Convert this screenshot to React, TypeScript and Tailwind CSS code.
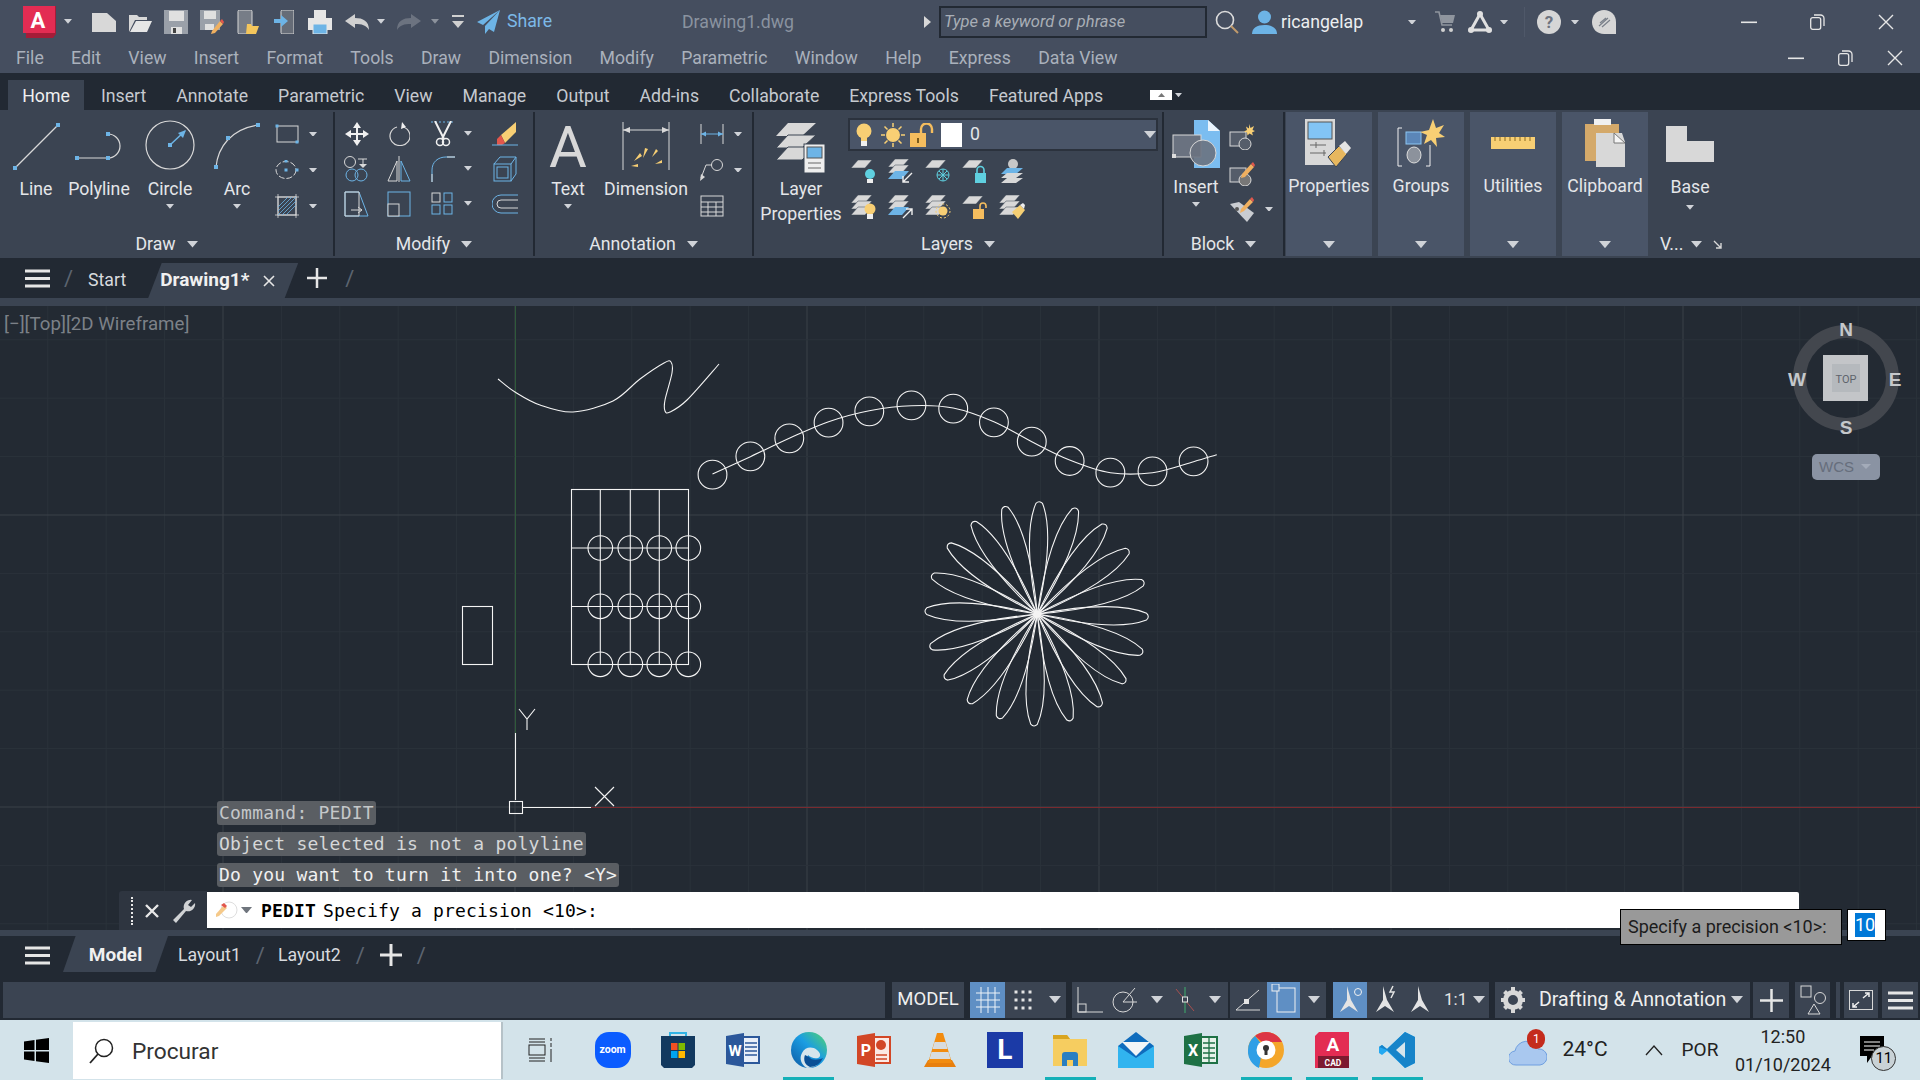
import type { ReactNode } from "react";

const ROW_TITLE = "bg-[#454e5f]";
const DARK = "bg-[#222933]";
const RIBBON = "bg-[#3b4452]";

const LINE = "#d8d8d8";
const BLUE = "#6db4e6";
const YELLOW = "#f8cf74";

function Ic({ w, h = w, children }: { w: number; h?: number; children: ReactNode }) {
  return (
    <svg width={w} height={h} viewBox={`0 0 ${w} ${h}`} fill="none" className="shrink-0">
      {children}
    </svg>
  );
}

function Caret({ w = 10, color = "#d0d3d8" }: { w?: number; color?: string }) {
  return (
    <svg width={w} height={w * 0.6} viewBox="0 0 10 6" className="shrink-0">
      <path d="M0 0h10L5 6z" fill={color} />
    </svg>
  );
}

function Node({ x, y, s = 4 }: { x: number; y: number; s?: number }) {
  return <rect x={x - s / 2} y={y - s / 2} width={s} height={s} fill={BLUE} />;
}

/* ---------- title bar icons ---------- */
const icons = {
  logo: (
    <Ic w={36} h={32}>
      <path d="M3 0h30v28l-3 4H3z" fill="#a51c38" />
      <rect x="0" width="32" height="27" fill="#e32c53" />
      <text x="15" y="22" textAnchor="middle" fontSize="22" fontWeight="700" fill="#fff" fontFamily="Roboto">A</text>
    </Ic>
  ),
  newDoc: <Ic w={24} h={20}><path d="M0 1h15l9 8v11H0z" fill={LINE} /></Ic>,
  open: <Ic w={24} h={20}><path d="M1 3h8l2 2h8v3H7L1 20z" fill={LINE} /><path d="M8 9h16l-5 11H2z" fill="#e6e6e6" /></Ic>,
  save: (
    <Ic w={24} h={24}>
      <rect width="24" height="24" fill="#9aa0a9" />
      <rect x="5" y="1" width="15" height="10" fill="#e0e0e0" />
      <rect x="7" y="17" width="11" height="7" fill="#e0e0e0" />
      <rect x="9" y="18" width="3" height="5" fill="#444" />
    </Ic>
  ),
  saveAs: (
    <Ic w={24} h={24}>
      <rect width="20" height="20" fill="#9aa0a9" />
      <rect x="4" y="1" width="12" height="8" fill="#e0e0e0" />
      <rect x="5" y="14" width="9" height="6" fill="#e0e0e0" />
      <path d="M12 21l8-10 3 3-8 9-4 1z" fill="#f0b060" />
      <path d="M20 11l2-2 2 3-1 2z" fill="#e2574c" />
    </Ic>
  ),
  phone: (
    <Ic w={22} h={24}>
      <rect x="1" y="0" width="14" height="24" rx="1.5" fill="#777d87" stroke="#d8d8d8" />
      <path d="M10 14h4l1 2h7l-3 8H9z" fill="#f4c65c" />
    </Ic>
  ),
  phoneUp: (
    <Ic w={20} h={24}>
      <rect x="7" y="0" width="13" height="24" rx="1.5" fill="#666c77" stroke="#d8d8d8" />
      <path d="M0 9h7V5l7 6-7 6v-4H0z" fill={BLUE} />
    </Ic>
  ),
  print: (
    <Ic w={24} h={24}>
      <rect x="6" y="0" width="12" height="8" fill="#e6e6e6" />
      <rect x="0" y="8" width="24" height="12" fill="#e6e6e6" />
      <rect x="5" y="14" width="14" height="10" fill={BLUE} stroke="#e6e6e6" />
    </Ic>
  ),
  undo: <Ic w={24} h={16}><path d="M0 7l10-7v4c8 0 14 3 14 12-3-5-7-6-14-6v4z" fill="#d0d0d0" /></Ic>,
  redo: <Ic w={24} h={16}><path d="M24 7L14 0v4C6 4 0 7 0 16c3-5 7-6 14-6v4z" fill="#6c7380" /></Ic>,
  custom: <Ic w={12} h={14}><path d="M0 1h12" stroke="#d0d0d0" strokeWidth="2" /><path d="M0 6h12L6 13z" fill="#d0d0d0" /></Ic>,
  share: <Ic w={23} h={24}><path d="M23 0L0 12l6 3zM23 0L8 16v8l4-5 5 3z" fill="#6db4e6" /></Ic>,
  search: (
    <Ic w={25} h={24}>
      <circle cx="10" cy="10" r="8.5" stroke="#dcdcdc" strokeWidth="1.6" />
      <path d="M16 16l7 7" stroke="#c19a6b" strokeWidth="2" />
    </Ic>
  ),
  user: (
    <Ic w={25} h={24}>
      <circle cx="12.5" cy="7" r="6.5" fill={BLUE} />
      <path d="M0 24c0-6 5-9 12.5-9S25 18 25 24z" fill={BLUE} />
    </Ic>
  ),
  cart: (
    <Ic w={20} h={22}>
      <path d="M0 1h4l3 13h10" stroke="#8f959e" strokeWidth="1.6" />
      <path d="M5 4h15l-2 8H7z" fill="#8f959e" />
      <circle cx="8" cy="19" r="2" fill="#d0d0d0" />
      <circle cx="16" cy="19" r="2" fill="#d0d0d0" />
    </Ic>
  ),
  tri: (
    <Ic w={24} h={22}>
      <path d="M12 3L3 19h18z" stroke="#e0e0e0" strokeWidth="3" />
      <circle cx="12" cy="3" r="3" fill="#e0e0e0" />
      <circle cx="3" cy="19" r="3" fill="#e0e0e0" />
      <circle cx="21" cy="19" r="3" fill="#e0e0e0" />
    </Ic>
  ),
  help: (
    <Ic w={24} h={24}>
      <circle cx="12" cy="12" r="12" fill="#d6d6d6" />
      <text x="12" y="18" textAnchor="middle" fontSize="17" fontWeight="700" fill="#6e7480" fontFamily="Roboto">?</text>
    </Ic>
  ),
  bubble: (
    <Ic w={24} h={24}>
      <path d="M12 0c7 0 12 5 12 12v12H12C5 24 0 19 0 12S5 0 12 0z" fill="#d6d6d6" />
      <path d="M7 16l9-8M10 17l8-7M8 13l6-5" stroke="#7a808a" strokeWidth="1.2" />
    </Ic>
  ),
};

function WinMin() {
  return <Ic w={16} h={3}><rect width="16" height="1.6" y="0.5" fill="#e6e6e6" /></Ic>;
}
function WinMax() {
  return (
    <Ic w={15} h={16}>
      <rect x="0.7" y="3.7" width="10" height="11.6" rx="2" stroke="#e6e6e6" strokeWidth="1.3" />
      <path d="M4 1h6.5a3.5 3.5 0 0 1 3.5 3.5V12" stroke="#e6e6e6" strokeWidth="1.3" />
    </Ic>
  );
}
function WinClose() {
  return <Ic w={16} h={16}><path d="M1 1l14 14M15 1L1 15" stroke="#e6e6e6" strokeWidth="1.4" /></Ic>;
}

/* ---------- ribbon drawings ---------- */
const LineIcon = () => (
  <Ic w={48}>
    <path d="M3 46L46 3" stroke={LINE} strokeWidth="1.2" />
    <Node x={3} y={46} /><Node x={46} y={3} />
  </Ic>
);
const PolylineIcon = () => (
  <Ic w={50} h={48}>
    <path d="M3 36h31a12 12 0 0 0 0-24" stroke={LINE} strokeWidth="1.2" />
    <Node x={3} y={36} /><Node x={34} y={36} /><Node x={34} y={12} />
  </Ic>
);
const CircleIcon = () => (
  <Ic w={50} h={50}>
    <circle cx="25" cy="25" r="24" stroke={LINE} strokeWidth="1.2" />
    <path d="M25 25l15-14" stroke={BLUE} strokeWidth="1.5" />
    <path d="M41 10l-3 8-5-5z" fill={BLUE} />
    <Node x={25} y={25} />
  </Ic>
);
const ArcIcon = () => (
  <Ic w={48}>
    <path d="M3 45C5 25 18 7 45 3" stroke={LINE} strokeWidth="1.2" />
    <Node x={3} y={45} /><Node x={15} y={16} /><Node x={45} y={3} />
  </Ic>
);
const RectIcon = () => (
  <Ic w={24} h={20}>
    <rect x="2" y="2" width="21" height="16" stroke={LINE} />
    <Node x={2} y={2} s={3} /><Node x={22} y={18} s={3} />
  </Ic>
);
const EllipseIcon = () => (
  <Ic w={24} h={20}>
    <ellipse cx="11" cy="10" rx="10" ry="8.5" stroke={LINE} strokeDasharray="6 2" />
    <Node x={11} y={10} s={3} /><Node x={22} y={10} s={3} /><Node x={11} y={1} s={3} />
  </Ic>
);
const HatchIcon = () => (
  <Ic w={24} h={24}>
    <rect x="3" y="3" width="18" height="18" stroke={LINE} />
    <path d="M0 3h24M0 21h24M3 0v24M21 0v24" stroke={LINE} strokeWidth="0.8" />
    <path d="M3 13l10-10M3 21L21 3M11 21l10-10M3 17L17 3M7 21L21 7" stroke={BLUE} strokeWidth="0.8" />
  </Ic>
);
const MoveIcon = () => (
  <Ic w={24} h={24}>
    <path d="M12 0l4 6h-3v5h5V8l6 4-6 4v-3h-5v5h3l-4 6-4-6h3v-5H6v3l-6-4 6-4v3h5V6H8z" fill="#f0f0f0" />
  </Ic>
);
const RotateIcon = () => (
  <Ic w={22} h={24}>
    <path d="M9 5a10 9.5 0 1 0 6 0" stroke={LINE} strokeWidth="1.2" />
    <path d="M14 0l4 5-5 2z" fill="#f0f0f0" />
  </Ic>
);
const TrimIcon = () => (
  <Ic w={24} h={26}>
    <path d="M0 1h24" stroke={BLUE} strokeDasharray="2 2" />
    <path d="M4 0l9 18M20 0l-9 18" stroke="#f0f0f0" strokeWidth="2" />
    <circle cx="9" cy="21" r="3.5" stroke="#f0f0f0" strokeWidth="1.5" />
    <circle cx="15" cy="21" r="3.5" stroke="#f0f0f0" strokeWidth="1.5" />
  </Ic>
);
const EraseIcon = () => (
  <Ic w={26} h={26}>
    <path d="M9 14L24 1v10L13 22z" fill={YELLOW} />
    <path d="M5 18l4-4 4 8-3 2H5z" fill="#e2574c" />
    <path d="M0 24h26" stroke={BLUE} />
  </Ic>
);
const CopyIcon = () => (
  <Ic w={26} h={26}>
    <circle cx="6" cy="6" r="5.5" stroke={LINE} />
    <path d="M14 3h9M19 3v6" stroke={LINE} /><path d="M15 8h8l-4 4z" fill={LINE} />
    <circle cx="8" cy="19" r="6" stroke={BLUE} /><circle cx="17" cy="19" r="6" stroke={BLUE} />
  </Ic>
);
const MirrorIcon = () => (
  <Ic w={24} h={26}>
    <path d="M12 0v26" stroke={LINE} />
    <path d="M10 5L1 25h9z" stroke={LINE} />
    <path d="M14 5l9 20h-9z" stroke={BLUE} />
  </Ic>
);
const FilletIcon = () => (
  <Ic w={24} h={26}>
    <path d="M1 26V14C1 6 7 1 15 1h9" stroke={BLUE} strokeWidth="1" />
    <path d="M1 26v-8M16 1h8" stroke={LINE} />
  </Ic>
);
const BoxIcon = () => (
  <Ic w={24} h={26}>
    <rect x="1" y="8" width="17" height="17" stroke={BLUE} />
    <path d="M1 8l6-7h16v17l-5 7M18 8l5-7" stroke={BLUE} />
    <rect x="4" y="11" width="11" height="11" stroke={BLUE} />
  </Ic>
);
const StretchIcon = () => (
  <Ic w={26} h={26}>
    <path d="M1 1h14l9 24H1z" stroke={BLUE} />
    <path d="M1 1v24h14V1z" stroke={LINE} />
    <path d="M7 19h11M14 16l4 3-4 3" stroke={LINE} />
  </Ic>
);
const ScaleIcon = () => (
  <Ic w={24} h={26}>
    <rect x="1" y="1" width="22" height="24" stroke={BLUE} />
    <rect x="1" y="13" width="11" height="12" stroke={LINE} fill="#3b4452" />
  </Ic>
);
const ArrayIcon = () => (
  <Ic w={22} h={24}>
    {[1, 13].map((x) =>
      [1, 13].map((y) => (
        <rect key={`${x}${y}`} x={x} y={y} width="8" height="9" stroke={y === 1 && x === 1 ? LINE : BLUE} />
      )),
    )}
  </Ic>
);
const OffsetIcon = () => (
  <Ic w={26} h={20}>
    <path d="M26 1H9a9 9 0 0 0 0 18h17" stroke={BLUE} />
    <path d="M26 6H9a4 4 0 0 0 0 8h17" stroke={LINE} />
  </Ic>
);
const TextIcon = () => (
  <div className="h-[50px] flex items-start">
    <span className="text-[58px] leading-[50px] text-[#d8d8d8] [font-family:Roboto,sans-serif]">A</span>
  </div>
);
const DimensionIcon = () => (
  <Ic w={48}>
    <path d="M1 0v48M47 0v48" stroke={LINE} />
    <path d="M1 8h46" stroke={LINE} />
    <path d="M1 8l7-3v6zM47 8l-7-3v6z" fill={LINE} />
    <g fill={YELLOW}>
      <path d="M21 36l2-10 3 1zM12 39l6-8 2 3zM30 35l4-8 2 2zM33 42l7-1v-3zM9 44l7-2v3z" />
    </g>
  </Ic>
);
const LinearIcon = () => (
  <Ic w={24} h={24}>
    <path d="M1 2v20M23 2v20" stroke={LINE} />
    <path d="M1 12h22" stroke={BLUE} />
    <path d="M1 12l5-2.5v5zM23 12l-5-2.5v5z" fill={BLUE} />
  </Ic>
);
const LeaderIcon = () => (
  <Ic w={24} h={24}>
    <circle cx="17" cy="7" r="5.5" stroke={LINE} />
    <path d="M12 7H6L1 20" stroke={LINE} />
    <path d="M0 23l1-7 4 3z" fill={LINE} />
  </Ic>
);
const TableIcon = () => (
  <Ic w={24} h={22}>
    <rect x="1" y="1" width="22" height="20" stroke={LINE} />
    <path d="M1 7h22M1 12h22M1 17h22M8 7v14M16 7v14" stroke={LINE} />
  </Ic>
);
const LayerPropsIcon = () => (
  <Ic w={50} h={52}>
    <path d="M12 1h28L26 14H0z" fill="#d8d8d8" />
    <path d="M12 13h28L26 26H0z" fill="#d8d8d8" stroke="#3b4452" />
    <path d="M12 25h28L26 38H0z" fill="#d8d8d8" stroke="#3b4452" />
    <rect x="28" y="22" width="21" height="29" fill="#eee" stroke="#3b4452" />
    <rect x="31" y="25" width="15" height="11" fill={BLUE} stroke="#555" />
    <path d="M32 41h13M32 46h13" stroke="#666" />
  </Ic>
);
const Bulb = ({ c = YELLOW }: { c?: string }) => (
  <Ic w={16} h={24}>
    <circle cx="8" cy="8" r="7.5" fill={c} />
    <path d="M5 15h6v3H5z" fill={c} />
    <path d="M5 18h6v5H5z" fill="#f0f0f0" />
  </Ic>
);
const Sun = () => (
  <Ic w={24} h={24}>
    <circle cx="12" cy="12" r="7" fill={YELLOW} />
    <path d="M12 0v4M12 20v4M0 12h4M20 12h4M3.5 3.5l3 3M17.5 17.5l3 3M3.5 20.5l3-3M17.5 6.5l3-3" stroke={YELLOW} strokeWidth="1.5" />
  </Ic>
);
const OpenLock = ({ c = "#f5bd5e" }: { c?: string }) => (
  <Ic w={24} h={24}>
    <rect x="0" y="10" width="16" height="14" fill={c} />
    <path d="M11 10V6a5.5 5.5 0 0 1 11 0v4" stroke={c} strokeWidth="2.4" />
    <rect x="7" y="15" width="2" height="5" fill="#7a5a1c" />
  </Ic>
);
const Sheet = ({ n = 1, y = 0 }: { n?: number; y?: number }) => (
  <>
    {Array.from({ length: n }).map((_, i) => (
      <path key={i} d={`M7 ${y + i * 6}h14l-7 8H0z`} fill="#d8d8d8" stroke="#3b4452" strokeWidth="0.5" />
    ))}
  </>
);
const layerRow1 = [
  <Ic w={26} key="a"><Sheet n={1} y={1} /><circle cx="19" cy="15" r="5" fill="#5fd0e0" /><rect x="16" y="20" width="6" height="4" fill="#eee" /></Ic>,
  <Ic w={26} key="b"><Sheet n={2} y={0} /><path d="M7 12h14l-7 8H0z" fill={BLUE} /><path d="M24 14l-9 9M15 17v6h6" stroke="#f0f0f0" strokeWidth="1.4" /></Ic>,
  <Ic w={26} key="c"><Sheet n={1} y={1} /><circle cx="18" cy="16" r="6" stroke="#5fd0e0" /><path d="M18 10v12M12 16h12M14 12l8 8M22 12l-8 8" stroke="#5fd0e0" /></Ic>,
  <Ic w={26} key="d"><Sheet n={1} y={1} /><rect x="13" y="14" width="11" height="10" fill="#5fd0e0" /><path d="M15 14v-3a3.5 3.5 0 0 1 7 0v3" stroke="#5fd0e0" strokeWidth="1.6" /></Ic>,
  <Ic w={26} key="e"><circle cx="14" cy="5" r="5" fill="#c8c8c8" /><path d="M8 9h16l-7 6H2z" fill={BLUE} /><path d="M8 14h16l-7 5H2zM8 19h16l-7 5H2z" fill="#d8d8d8" /></Ic>,
];
const layerRow2 = [
  <Ic w={26} key="a"><Sheet n={3} y={0} /><circle cx="19" cy="14" r="5.5" fill={YELLOW} /><rect x="16" y="19" width="6" height="5" fill="#eee" /></Ic>,
  <Ic w={26} key="b"><Sheet n={2} y={0} /><path d="M7 12h14l-7 8H0z" fill={BLUE} /><path d="M15 23l9-9M18 14h6v6" stroke="#f0f0f0" strokeWidth="1.4" /></Ic>,
  <Ic w={26} key="c"><Sheet n={3} y={0} /><circle cx="18" cy="16" r="4.5" fill={YELLOW} /><circle cx="18" cy="16" r="7" stroke={YELLOW} strokeDasharray="2 2" /></Ic>,
  <Ic w={26} key="d"><Sheet n={1} y={1} /><rect x="11" y="14" width="11" height="10" fill="#f5bd5e" /><path d="M18 14v-3a3 3 0 0 1 6 0v2" stroke="#f5bd5e" strokeWidth="1.6" /></Ic>,
  <Ic w={26} key="e"><Sheet n={3} y={0} /><path d="M13 17l8-7 5 5-7 9z" fill="#f5cf74" /><path d="M21 10l3-2 2 2-1 4z" fill="#eee" /></Ic>,
];
const InsertIcon = () => (
  <Ic w={48} h={48}>
    <path d="M22 0h14l12 11v37H22z" fill="#7bbdf0" />
    <path d="M36 0l12 11H36z" fill="#eaf4fc" />
    <rect x="1" y="15" width="28" height="22" fill="#6a7280" stroke="#d8d8d8" />
    <circle cx="31" cy="33" r="13" fill="#6a7280" fillOpacity="0.9" stroke="#d8d8d8" />
    <rect x="0" y="34" width="4" height="4" fill="#ddd" />
  </Ic>
);
const CreateBlock = () => (
  <Ic w={26} h={26}>
    <rect x="1" y="8" width="16" height="14" fill="#555d6a" stroke="#d8d8d8" />
    <circle cx="16" cy="20" r="6" fill="#555d6a" stroke="#d8d8d8" />
    <path d="M20 0l1.5 4 3.5-2-1.5 4 2.5 1-3 1.5 1 3-3.5-2-2 2-.5-3-3-1 3-1.5-1-3.5 3 2z" fill={YELLOW} />
  </Ic>
);
const EditBlock = () => (
  <Ic w={26} h={26}>
    <rect x="1" y="8" width="16" height="14" fill="#555d6a" stroke="#d8d8d8" />
    <circle cx="16" cy="20" r="6" fill="#777" stroke="#d8d8d8" />
    <path d="M13 14l9-10 3 3-9 10-4 1z" fill="#f0b060" />
    <path d="M22 4l2-2 2 3-1 2z" fill="#e2574c" />
  </Ic>
);
const TagBlock = () => (
  <Ic w={26} h={26}>
    <path d="M1 8l9-2 15 11-7 9z" fill="#c9ccd1" />
    <circle cx="8" cy="13" r="2" fill="#555" />
    <path d="M12 13l9-10 3 3-9 9-4 2z" fill="#f0b060" />
    <path d="M21 3l2-2 2 3-1 2z" fill="#e2574c" />
  </Ic>
);
const PropertiesIcon = () => (
  <Ic w={48}>
    <rect x="0" y="0" width="30" height="46" fill="#d8d8d8" />
    <rect x="3" y="3" width="24" height="17" fill="#82c4f5" stroke="#555" />
    <path d="M5 26h16M5 34h16M11 23v6M19 31v6" stroke="#666" />
    <path d="M23 38l11-11 8 8-11 13z" fill="#e7b75e" stroke="#3b4452" />
    <path d="M34 27l6-5 6 7-5 6z" fill="#e4e4e4" />
  </Ic>
);
const GroupsIcon = () => (
  <Ic w={48}>
    <path d="M5 9H1v38h4M33 26v21h-4" stroke="#f0f0f0" />
    <rect x="9" y="13" width="15" height="12" fill="#5b86b8" stroke="#8cc6f2" />
    <ellipse cx="17" cy="36" rx="7" ry="8" fill="#8c929c" stroke="#ddd" />
    <path d="M36 0l3 9 8-3-5 8 6 4-9 1 1 9-6-7-7 4 3-9-7-3 9-2z" fill={YELLOW} />
  </Ic>
);
const UtilitiesIcon = () => (
  <Ic w={44} h={14}>
    <rect y="1" width="44" height="12" fill={YELLOW} />
    <path d="M4 1v4M9 1v4M14 1v4M19 1v4M24 1v4M29 1v4M34 1v4M39 1v4" stroke="#8a6a20" />
  </Ic>
);
const ClipboardIcon = () => (
  <Ic w={40} h={48}>
    <rect x="0" y="5" width="34" height="37" fill="#d4a96a" />
    <rect x="9" y="0" width="17" height="6" fill="#f0f0f0" />
    <path d="M11 14h26l3 9v25H11z" fill="#d8d8d8" />
    <path d="M29 14l11 10H29z" fill="#f5f5f5" stroke="#777" />
  </Ic>
);
const BaseIcon = () => (
  <Ic w={48} h={36}>
    <path d="M0 0h21v15h27v21H0z" fill="#d8d8d8" />
  </Ic>
);

/* ---------- ribbon layout ---------- */
function LargeTool({ w, label, icon, caret = true, pad = "pt-[12px]" }: { w: string; label: ReactNode; icon: ReactNode; caret?: boolean; pad?: string }) {
  return (
    <div className={`${w} ${pad} shrink-0 flex flex-col items-center`}>
      <div className="h-[55px] flex items-start justify-center">{icon}</div>
      <div className="text-center leading-[25px] text-[#e4e6e9]">{label}</div>
      {caret && <div className="mt-[2px]"><Caret w={8} /></div>}
    </div>
  );
}

function Small({ icon, caret, w = "w-[42px]", h = "h-[36px]" }: { icon: ReactNode; caret?: boolean; w?: string; h?: string }) {
  return (
    <div className={`${w} ${h} flex items-center justify-between`}>
      {icon}
      {caret && <Caret w={8} />}
    </div>
  );
}

function Panel({ w, title, children }: { w: string; title: string; children: ReactNode }) {
  return (
    <div className={`${w} shrink-0 h-full flex flex-col border-r-2 border-[#222933]`}>
      <div className="flex-1 flex min-h-0">{children}</div>
      <div className="h-[26px] pt-[3px] flex items-center justify-center gap-[11px] text-[#e4e6e9]">
        <span>{title}</span>
        <Caret w={11} />
      </div>
    </div>
  );
}

function Flyout({ label, icon }: { label: string; icon: ReactNode }) {
  return (
    <div className="w-[86px] bg-[#4a5568] flex flex-col items-center pt-[6px]">
      <div className="h-[50px] flex items-center justify-center">{icon}</div>
      <div className="mt-[6px] leading-[24px] text-[#e4e6e9]">{label}</div>
      <div className="mt-auto mb-[8px]"><Caret w={12} /></div>
    </div>
  );
}

function Ribbon() {
  return (
    <div className={`h-[148px] shrink-0 ${RIBBON} flex py-[2px]`}>
      <Panel w="w-[335px]" title="Draw">
        <div className="w-[3px]" />
        <LargeTool w="w-[66px]" pad="pt-[10px]" label="Line" icon={<LineIcon />} caret={false} />
        <LargeTool w="w-[60px]" pad="pt-[10px]" label="Polyline" icon={<PolylineIcon />} caret={false} />
        <LargeTool w="w-[82px]" pad="pt-[10px]" label="Circle" icon={<div className="-mt-[2px]"><CircleIcon /></div>} />
        <LargeTool w="w-[52px]" pad="pt-[10px]" label="Arc" icon={<ArcIcon />} />
        <div className="ml-[12px] pt-[4px]">
          <Small icon={<RectIcon />} caret />
          <Small icon={<EllipseIcon />} caret />
          <Small icon={<HatchIcon />} caret />
        </div>
      </Panel>
      <Panel w="w-[200px]" title="Modify">
        <div className="pt-[4px] grid grid-cols-[44px_36px_64px_40px] gap-x-[2px] justify-items-center self-start">
          <Small w="" h="h-[35px]" icon={<MoveIcon />} />
          <Small w="" h="h-[35px]" icon={<RotateIcon />} />
          <Small w="w-[41px]" h="h-[35px]" icon={<TrimIcon />} caret />
          <Small w="" h="h-[35px]" icon={<EraseIcon />} />
          <Small w="" h="h-[35px]" icon={<CopyIcon />} />
          <Small w="" h="h-[35px]" icon={<MirrorIcon />} />
          <Small w="w-[41px]" h="h-[35px]" icon={<FilletIcon />} caret />
          <Small w="" h="h-[35px]" icon={<BoxIcon />} />
          <Small w="" h="h-[35px]" icon={<StretchIcon />} />
          <Small w="" h="h-[35px]" icon={<ScaleIcon />} />
          <Small w="w-[41px]" h="h-[35px]" icon={<ArrayIcon />} caret />
          <Small w="" h="h-[35px]" icon={<OffsetIcon />} />
        </div>
      </Panel>
      <Panel w="w-[219px]" title="Annotation">
        <LargeTool w="w-[66px]" pad="pt-[10px]" label="Text" icon={<TextIcon />} />
        <LargeTool w="w-[90px]" pad="pt-[10px]" label="Dimension" icon={<DimensionIcon />} caret={false} />
        <div className="ml-[9px] pt-[4px]">
          <Small w="w-[42px]" icon={<LinearIcon />} caret />
          <Small w="w-[42px]" icon={<LeaderIcon />} caret />
          <Small w="w-[42px]" icon={<TableIcon />} />
        </div>
      </Panel>
      <Panel w="w-[410px]" title="Layers">
        <LargeTool
          w="w-[94px]"
          pad="pt-[10px]"
          label={<>Layer<br />Properties</>}
          icon={<LayerPropsIcon />}
          caret={false}
        />
        <div className="w-[310px] pt-[6px]">
          <div className="h-[33px] bg-[#4a5568] border-2 border-[#2b323d] flex items-center pl-[6px]">
            <Bulb />
            <div className="ml-[9px]"><Sun /></div>
            <div className="ml-[5px]"><OpenLock /></div>
            <div className="ml-[7px] w-[21px] h-[24px] bg-white" />
            <span className="ml-[8px] text-[#e4e6e9]">0</span>
            <div className="ml-auto"><Caret w={12} /></div>
          </div>
          <div className="mt-[3px] pl-[3px] flex gap-[11px] h-[36px] items-center">{layerRow1}</div>
          <div className="pl-[3px] flex gap-[11px] h-[36px] items-center">{layerRow2}</div>
        </div>
      </Panel>
      <Panel w="w-[121px]" title="Block">
        <LargeTool w="w-[64px]" pad="pt-[8px]" label="Insert" icon={<InsertIcon />} />
        <div className="ml-[1px] pt-[7px]">
          <Small w="w-[44px]" icon={<CreateBlock />} />
          <Small w="w-[44px]" icon={<EditBlock />} />
          <Small w="w-[44px]" icon={<TagBlock />} caret />
        </div>
      </Panel>
      <div className="ml-[1px] flex gap-[6px]">
        <Flyout label="Properties" icon={<PropertiesIcon />} />
        <Flyout label="Groups" icon={<GroupsIcon />} />
        <Flyout label="Utilities" icon={<UtilitiesIcon />} />
        <Flyout label="Clipboard" icon={<ClipboardIcon />} />
      </div>
      <div className="ml-[4px] w-[90px] shrink-0 flex flex-col pt-[14px] text-[#e4e6e9]">
        <div className="w-[76px] flex flex-col items-center">
          <div className="h-[40px]"><BaseIcon /></div>
          <div className="mt-[9px] leading-[24px]">Base</div>
          <div className="mt-[6px]"><Caret w={8} /></div>
        </div>
        <div className="mt-auto h-[26px] pt-[3px] flex items-center self-start pl-[8px]">
          <span>V...</span>
          <div className="ml-[8px]"><Caret w={11} /></div>
          <div className="ml-[11px]"><Ic w={9} h={9}><path d="M1 1l7 7M8 3v5H3" stroke="#d8d8d8" strokeWidth="1.4" /></Ic></div>
        </div>
      </div>
    </div>
  );
}

/* ---------- canvas ---------- */
function smooth(pts: number[][]) {
  let d = `M${pts[0][0]} ${pts[0][1]}`;
  for (let i = 0; i < pts.length - 1; i++) {
    const p0 = pts[i - 1] ?? pts[i];
    const p1 = pts[i];
    const p2 = pts[i + 1];
    const p3 = pts[i + 2] ?? p2;
    const c1 = [p1[0] + (p2[0] - p0[0]) / 6, p1[1] + (p2[1] - p0[1]) / 6];
    const c2 = [p2[0] - (p3[0] - p1[0]) / 6, p2[1] - (p3[1] - p1[1]) / 6];
    d += ` C${c1[0].toFixed(1)} ${c1[1].toFixed(1)} ${c2[0].toFixed(1)} ${c2[1].toFixed(1)} ${p2[0].toFixed(1)} ${p2[1].toFixed(1)}`;
  }
  return d;
}

const SPLINE1 = [[498, 379], [515, 392], [540, 405], [573, 412], [613, 401], [640, 379], [664, 363], [671, 362], [672, 373], [665, 400], [665, 411], [670, 412], [687, 400], [719, 364]];
const SPLINE2 = [[91, 402], [197, 350], [306, 295], [416, 245], [530, 212], [648, 197], [765, 204], [879, 245], [985, 305], [1091, 360], [1205, 398], [1323, 398], [1438, 365], [1503, 344]].map(([x, y]) => [x / 2.8 + 680, y / 3 + 340]);
const BEADS = [[91, 404], [197, 349], [306, 295], [416, 248], [530, 214], [648, 196], [765, 206], [879, 247], [985, 305], [1091, 363], [1205, 398], [1323, 394], [1438, 364]].map(([x, y]) => [x / 2.8 + 680, y / 3 + 340]);
const PETALS = [[478, 60], [590, 80], [680, 130], [750, 207], [797, 305], [810, 410], [793, 520], [740, 610], [665, 683], [573, 727], [462, 743], [355, 720], [263, 673], [190, 598], [145, 503], [130, 393], [150, 285], [200, 190], [275, 122], [372, 75]];

const gridX = Array.from({ length: 33 }, (_, i) => 47.8 + i * 58.4);
const gridY = Array.from({ length: 12 }, (_, i) => 281.4 + i * 58.4);
const cols = [600.3, 630.3, 659.3, 688.3];
const rows = [548, 606.3, 664.3];

function Canvas() {
  return (
    <svg viewBox="0 306 1920 624" className="absolute inset-0 w-full h-full" fill="none">
      {gridX.map((x, i) => (
        <path key={i} d={`M${x.toFixed(1)} 306V930`} stroke={i % 5 === 3 ? "#3a4148" : "#2b323b"} />
      ))}
      {gridY.map((y, i) => (
        <path key={i} d={`M0 ${y.toFixed(1)}H1920`} stroke={i % 5 === 4 ? "#3a4148" : "#2b323b"} />
      ))}
      <path d="M515.5 306V733" stroke="#2f5a3a" />
      <path d="M591 807.5H1920" stroke="#7a2a2f" />
      <g stroke="#f4f4f4" strokeWidth="1.1">
        <path d={smooth(SPLINE1)} />
        <path d={smooth(SPLINE2)} />
        {BEADS.map(([x, y], i) => (
          <circle key={i} cx={x} cy={y} r="14.4" />
        ))}
        <rect x="462.5" y="606.5" width="30" height="58" />
        <rect x="571.5" y="489.5" width="117" height="175" />
        {cols.slice(0, 3).map((x) => <path key={x} d={`M${x} 489.5V664`} />)}
        <path d="M571.5 548H688M571.5 606.5H688" />
        {cols.map((x) => rows.map((y) => <circle key={`${x}${y}`} cx={x} cy={y} r="12.3" />))}
        {PETALS.map(([tx, ty], i) => {
          const dx = (tx - 472) / 3;
          const dy = (ty - 402) / 3;
          const L = Math.hypot(dx, dy);
          const deg = (Math.atan2(dy, dx) * 180) / Math.PI;
          const w = 11;
          return (
            <path
              key={i}
              transform={`translate(1037.3 614) rotate(${deg.toFixed(1)})`}
              d={`M0 0C${L * 0.35} ${-w * 0.75} ${L * 0.75} ${-w * 1.25} ${L * 0.97} ${-w * 0.3}Q${L} 0 ${L * 0.97} ${w * 0.3}C${L * 0.75} ${w * 1.25} ${L * 0.35} ${w * 0.75} 0 0`}
            />
          );
        })}
        <path d="M515.5 733V800M522 807.5H591" />
        <rect x="509.5" y="801.5" width="13" height="12" />
        <path d="M595 787l19 19M614 787l-19 19" />
        <path d="M519 709l8 10 8-10M527 719v11" />
      </g>
    </svg>
  );
}

function ViewCube() {
  return (
    <svg viewBox="0 0 130 170" className="absolute right-[9px] top-[11px] w-[130px] h-[170px]" fill="none">
      <circle cx="65" cy="61" r="46.5" stroke="#43474e" strokeWidth="13" />
      <rect x="42" y="38" width="45" height="46" fill="#c3c5c8" />
      <rect x="51" y="47" width="28" height="28" fill="#b5b9bd" />
      <g fontFamily="'Liberation Sans'" fontWeight="700" fontSize="19" fill="#c5c8cb" textAnchor="middle">
        <text x="65" y="19">N</text>
        <text x="65" y="117">S</text>
        <text x="16" y="69">W</text>
        <text x="114" y="69">E</text>
      </g>
      <text x="65" y="66" textAnchor="middle" fontSize="11" fontFamily="Roboto" fill="#5e646c">TOP</text>
      <rect x="31" y="137" width="68" height="26" rx="5" fill="#8a93a3" />
      <text x="38" y="155" fontSize="15" fontFamily="'Liberation Sans'" fill="#666e7c">WCS</text>
      <path d="M80 147h10l-5 5z" fill="#a3abb9" />
    </svg>
  );
}

function Viewport() {
  const lines = [
    { t: "Command: PEDIT", c: "text-[#c4c7c9]" },
    { t: "Object selected is not a polyline", c: "text-[#d5d7d8]" },
    { t: "Do you want to turn it into one? <Y>", c: "text-[#f0f0f0]" },
  ];
  return (
    <div className="relative flex-1 min-h-0 bg-[#232a33] overflow-hidden">
      <Canvas />
      <div className="absolute left-[4px] top-[8px] text-[18.7px] leading-[20px] text-[#7c8188]">[−][Top][2D Wireframe]</div>
      <ViewCube />
      <div className="absolute left-[217px] top-[495px] flex flex-col gap-[7px] items-start [font-family:'DejaVu_Sans_Mono',monospace] text-[18px] tracking-[0.22px]">
        {lines.map((l) => (
          <div key={l.t} className={`h-[24px] px-[2px] rounded-[3px] bg-[#5a5e63] leading-[24px] ${l.c}`}>
            {l.t}
          </div>
        ))}
      </div>
      <div className="absolute left-[119px] right-[121px] bottom-0 h-[39px] flex">
        <div className="w-[88px] bg-[#2e3540] rounded-tl-[3px] flex items-center">
          <div className="ml-[12px] h-[28px] border-l-2 border-dotted border-[#e8e8e8]" />
          <div className="ml-[11px]"><Ic w={16} h={16}><path d="M2 2l12 12M14 2L2 14" stroke="#e8e8e8" strokeWidth="2.4" /></Ic></div>
          <div className="ml-[12px]"><Ic w={24} h={26}><path d="M23 5a7 7 0 0 1-9 8L4 25l-3-3 11-11a7 7 0 0 1 8-9l-4 5 3 2z" fill="#d0d2d4" /></Ic></div>
        </div>
        <div className="flex-1 h-[36px] mt-[1px] bg-white rounded-tr-[2px] flex items-center pl-[7px] [font-family:'DejaVu_Sans_Mono',monospace] text-[18px] tracking-[0.16px] text-black">
          <Ic w={24} h={18}>
            <circle cx="15" cy="9" r="8" stroke="#dedede" />
            <path d="M2 13l8-9 3 3-8 8-3 1z" fill="#f5c98a" />
            <path d="M7 4l3-2 3 3-2 2z" fill="#e2574c" />
          </Ic>
          <div className="ml-[3px]"><Caret w={11} color="#6f757d" /></div>
          <span className="ml-[9px] font-bold">PEDIT</span>
          <span className="ml-[7px]">Specify a precision &lt;10&gt;:</span>
        </div>
      </div>
    </div>
  );
}

/* ---------- status bar ---------- */
const GridIcon = () => (
  <Ic w={24} h={26}><path d="M0 6h24M0 13h24M0 20h24M5 0v26M12 0v26M19 0v26" stroke="#eef3f8" /></Ic>
);
const SnapIcon = () => (
  <Ic w={18} h={20}>
    {[2, 9, 16].map((x) => [2, 10, 18].map((y) => <rect key={`${x}${y}`} x={x - 1.5} y={y - 1.5} width="3" height="3" fill="#e4e4e4" />))}
  </Ic>
);
const OrthoIcon = () => (
  <Ic w={26} h={26}><path d="M1 0v25h25" stroke="#d8d8d8" /><rect x="1" y="17" width="8" height="8" stroke="#d8d8d8" /></Ic>
);
const PolarIcon = () => (
  <Ic w={26} h={26}><circle cx="11" cy="15" r="10" stroke="#d8d8d8" /><path d="M11 15L23 1M11 15h14" stroke="#d8d8d8" /></Ic>
);
const OsnapIcon = () => (
  <Ic w={20} h={26}><path d="M10 0v26" stroke="#3fae6c" /><path d="M1 2l18 22" stroke="#a8504f" /><rect x="7.5" y="10" width="5" height="5" stroke="#e4e4e4" fill="#3b4452" /></Ic>
);
const IsoIcon = () => (
  <Ic w={26} h={22}><path d="M1 21L24 1M1 21h24" stroke="#d8d8d8" /><rect x="9" y="10" width="5" height="5" fill="#e4e4e4" /></Ic>
);
const OtrackIcon = () => (
  <Ic w={26} h={32}><rect x="6" y="4" width="18" height="24" stroke="#f0f0f0" /><rect x="1" y="0" width="7" height="7" stroke="#f0f0f0" fill="#5f8fc4" /></Ic>
);
const Anno = ({ extra }: { extra?: ReactNode }) => (
  <Ic w={28} h={32}>
    <path d="M11 2l4 14 7 12-9-6-9 6 7-12z" fill="#e4e4e4" />
    {extra}
  </Ic>
);
const Hamburger = () => (
  <Ic w={25} h={19}><path d="M0 2h25M0 9.5h25M0 17h25" stroke="#e6e6e6" strokeWidth="3" /></Ic>
);
const PlusSign = ({ s = 22, w = 3, c = "#e6e6e6" }: { s?: number; w?: number; c?: string }) => (
  <Ic w={s}><path d={`M0 ${s / 2}H${s}M${s / 2} 0V${s}`} stroke={c} strokeWidth={w} /></Ic>
);

function Tile({ w, ml = "", children, extra = "" }: { w: string; ml?: string; children?: ReactNode; extra?: string }) {
  return <div className={`${w} ${ml} ${extra} shrink-0 ${RIBBON} flex items-center`}>{children}</div>;
}

function StatusBar() {
  return (
    <div className={`h-[40px] shrink-0 ${DARK} flex items-stretch py-[2px]`}>
      <Tile w="w-[882px]" ml="ml-[3px]" />
      <Tile w="w-[72px]" ml="ml-[7px]" extra="justify-center text-[#f0f0f0] text-[18.5px]">MODEL</Tile>
      <Tile w="w-[96px]" ml="ml-[6px]">
        <div className="w-[35px] h-full bg-[#5f8fc4] flex items-center justify-center"><GridIcon /></div>
        <div className="ml-[9px]"><SnapIcon /></div>
        <div className="ml-[17px]"><Caret w={12} /></div>
      </Tile>
      <Tile w="w-[156px]" ml="ml-[6px]">
        <div className="ml-[5px]"><OrthoIcon /></div>
        <div className="ml-[9px]"><PolarIcon /></div>
        <div className="ml-[13px]"><Caret w={12} /></div>
        <div className="ml-[12px]"><OsnapIcon /></div>
        <div className="ml-[14px]"><Caret w={12} /></div>
      </Tile>
      <Tile w="w-[96px]" ml="ml-[2px]">
        <div className="ml-[5px]"><IsoIcon /></div>
        <div className="ml-[6px] w-[33px] h-full bg-[#5f8fc4] flex items-center justify-center"><OtrackIcon /></div>
        <div className="ml-[8px]"><Caret w={12} /></div>
      </Tile>
      <Tile w="w-[156px]" ml="ml-[7px]" extra="text-[#e6e6e6]">
        <div className="w-[34px] h-full bg-[#5f8fc4] flex items-center justify-center">
          <Anno extra={<circle cx="22" cy="8" r="3.5" stroke="#f0f0f0" />} />
        </div>
        <div className="ml-[5px]"><Anno extra={<path d="M21 2l-3 6h4l-3 6" stroke="#e4e4e4" strokeWidth="1.5" />} /></div>
        <div className="ml-[7px]"><Anno /></div>
        <span className="ml-[9px] text-[17px]">1:1</span>
        <div className="ml-[6px]"><Caret w={12} /></div>
      </Tile>
      <Tile w="w-[255px]" ml="ml-[6px]" extra="text-[#f0f0f0] text-[19.6px]">
        <div className="ml-[6px]">
          <Ic w={24} h={26}>
            <circle cx="12" cy="13" r="7.5" stroke="#d8d8d8" strokeWidth="5" />
            <path d="M12 0v6M12 20v6M0 13h6M18 13h6M3.5 4.5l4 4M16.5 17.5l4 4M3.5 21.5l4-4M16.5 8.5l4-4" stroke="#d8d8d8" strokeWidth="4" />
          </Ic>
        </div>
        <span className="ml-[14px] whitespace-nowrap">Drafting &amp; Annotation</span>
        <div className="ml-[5px]"><Caret w={12} /></div>
      </Tile>
      <Tile w="w-[36px]" ml="ml-[3px]" extra="justify-center"><PlusSign s={23} w={2.5} /></Tile>
      <Tile w="w-[35px]" ml="ml-[6px]" extra="justify-center">
        <Ic w={26} h={30}>
          <rect x="1" y="1" width="10" height="11" stroke="#d8d8d8" />
          <circle cx="20" cy="13" r="5.5" stroke="#d8d8d8" />
          <path d="M8 29l6-10 6 10z" stroke="#d8d8d8" />
        </Ic>
      </Tile>
      <Tile w="w-[4px]" ml="ml-[6px]" />
      <Tile w="w-[34px]" ml="ml-[4px]" extra="justify-center">
        <Ic w={24} h={20}>
          <rect x="0.5" y="0.5" width="23" height="19" stroke="#d8d8d8" />
          <path d="M14 8l6-5M16 3h4v4M10 12l-6 5M4 13v4h4" stroke="#f0f0f0" strokeWidth="1.5" />
        </Ic>
      </Tile>
      <Tile w="w-[36px]" ml="ml-[4px]" extra="justify-center"><Hamburger /></Tile>
    </div>
  );
}

/* ---------- taskbar ---------- */
const taskIcons: { k: string; on?: boolean; node: ReactNode }[] = [
  {
    k: "view",
    node: (
      <Ic w={24} h={24}>
        <path d="M1 1h16M1 4h16M1 20h16M1 23h16" stroke="#222" />
        <rect x="1" y="7" width="16" height="10" stroke="#222" />
        <path d="M23 0v3M23 5v4M23 11v13" stroke="#222" />
      </Ic>
    ),
  },
  {
    k: "zoom",
    node: (
      <div className="w-[36px] h-[36px] rounded-[14px] bg-[#0b5cff] flex items-center justify-center text-white text-[10.5px] font-bold">zoom</div>
    ),
  },
  {
    k: "store",
    node: (
      <Ic w={36}>
        <path d="M10 4V1h16v3" stroke="#32b4e5" strokeWidth="2" />
        <path d="M1 4h34v29l-3 3H4l-3-3z" fill="#12395f" />
        <rect x="11" y="11" width="6.5" height="7" fill="#f25022" />
        <rect x="18.5" y="11" width="6.5" height="7" fill="#7fba00" />
        <rect x="11" y="19" width="6.5" height="7" fill="#00a4ef" />
        <rect x="18.5" y="19" width="6.5" height="7" fill="#ffb900" />
      </Ic>
    ),
  },
  {
    k: "word",
    node: (
      <Ic w={34} h={34}>
        <rect x="12" y="4" width="21" height="26" fill="#e8eef8" stroke="#2b579a" strokeWidth="2" />
        <path d="M19 10h12M19 14h12M19 18h12M19 22h12" stroke="#2b579a" strokeWidth="1.5" />
        <path d="M0 3l18-3v34L0 31z" fill="#2b579a" />
        <text x="9" y="23" textAnchor="middle" fontSize="15" fontWeight="700" fill="#fff" fontFamily="Roboto">W</text>
      </Ic>
    ),
  },
  {
    k: "edge",
    on: true,
    node: (
      <Ic w={36}>
        <defs>
          <linearGradient id="edge" x1="0" y1="1" x2="1" y2="0">
            <stop offset="0" stopColor="#0c59a4" />
            <stop offset="0.55" stopColor="#1b9de2" />
            <stop offset="1" stopColor="#54d66b" />
          </linearGradient>
        </defs>
        <circle cx="18" cy="18" r="18" fill="url(#edge)" />
        <path d="M16 36c-6-3-8-10-5-15 3-6 10-7 15-3 4 3 4 7 1 8-4 1-8-1-10-3-2 5 3 10 9 10-3 2-6 3-10 3z" fill="#d6e5ec" />
        <path d="M18 25c3 4 9 3 14 1-3 6-8 9-13 9-5-2-7-7-5-12z" fill="#0a4f95" />
      </Ic>
    ),
  },
  {
    k: "ppt",
    node: (
      <Ic w={34} h={34}>
        <rect x="13" y="4" width="20" height="26" fill="#fbe9e4" stroke="#d24726" strokeWidth="2" />
        <circle cx="24" cy="12" r="5" fill="#d24726" />
        <path d="M19 22h11M19 26h11" stroke="#d24726" strokeWidth="1.5" />
        <path d="M0 3l18-3v34L0 31z" fill="#d24726" />
        <text x="9" y="23" textAnchor="middle" fontSize="16" fontWeight="700" fill="#fff" fontFamily="Roboto">P</text>
      </Ic>
    ),
  },
  {
    k: "vlc",
    node: (
      <Ic w={32} h={36}>
        <path d="M4 28L0 35h32l-4-7z" fill="#e87f0d" />
        <path d="M13 1h6l9 30H4z" fill="#f28c0f" />
        <path d="M10.5 10h11l2 7h-15zM7.5 20h17l2 7H5.5z" fill="#d8dcde" />
      </Ic>
    ),
  },
  {
    k: "l",
    node: (
      <div className="w-[36px] h-[36px] bg-[#1b3aa6] flex items-center justify-center text-white text-[28px] font-bold leading-none">L</div>
    ),
  },
  {
    k: "folder",
    on: true,
    node: (
      <Ic w={34} h={32}>
        <path d="M0 1h14l3 4h17v27H0z" fill="#f6cd60" />
        <path d="M0 1h14l3 4H0z" fill="#d9a520" />
        <path d="M9 32V21a3 3 0 0 1 3-3h10a3 3 0 0 1 3 3v11h-5v-6h-6v6z" fill="#2a7fc1" />
      </Ic>
    ),
  },
  {
    k: "mail",
    node: (
      <Ic w={36}>
        <path d="M18 0L36 14v22H0V14z" fill="#0f6cbd" />
        <path d="M4 10h28L18 24z" fill="#f2f5f7" />
        <path d="M0 14l18 12 18-12v22H0z" fill="#31b4ef" />
      </Ic>
    ),
  },
  {
    k: "excel",
    node: (
      <Ic w={34} h={34}>
        <rect x="12" y="4" width="21" height="26" fill="#e6f2ea" stroke="#1e7145" strokeWidth="2" />
        <path d="M19 10h12M19 15h12M19 20h12M19 25h12M25 5v24" stroke="#1e7145" strokeWidth="1.3" />
        <path d="M0 3l18-3v34L0 31z" fill="#1e7145" />
        <text x="9" y="23" textAnchor="middle" fontSize="16" fontWeight="700" fill="#fff" fontFamily="Roboto">X</text>
      </Ic>
    ),
  },
  {
    k: "avast",
    on: true,
    node: (
      <Ic w={36}>
        <circle cx="18" cy="18" r="18" fill="#f4a62a" />
        <path d="M18 0a18 18 0 0 1 16 10H14L7 4a18 18 0 0 1 11-4z" fill="#dc3545" />
        <path d="M0 18A18 18 0 0 1 7 4l8 10-4 22A18 18 0 0 1 0 18z" fill="#2f9fe6" />
        <circle cx="18" cy="18" r="9.5" fill="#fff" />
        <circle cx="18" cy="16" r="3" fill="#333" />
        <rect x="16.5" y="17" width="3" height="6" fill="#333" />
      </Ic>
    ),
  },
  {
    k: "cad",
    on: true,
    node: (
      <Ic w={34} h={36}>
        <path d="M4 0h30v36H0V4z" fill="#e32c53" />
        <rect y="24" x="3" width="31" height="12" fill="#7d1a30" />
        <text x="18" y="19" textAnchor="middle" fontSize="19" fontWeight="700" fill="#fff" fontFamily="Roboto">A</text>
        <text x="18" y="33.5" textAnchor="middle" fontSize="8.5" fontWeight="700" fill="#fff" fontFamily="Roboto">CAD</text>
      </Ic>
    ),
  },
  {
    k: "code",
    on: true,
    node: (
      <Ic w={36}>
        <path d="M26 0l10 5v26l-10 5L8 19l-5 4-3-2v-6l3-2 5 4z" fill="#23a9f2" />
        <path d="M26 0L8 17 3 13l-3 2 8 3 18 18 10-5V5z" fill="#1784c9" />
        <path d="M26 10v16l-9-8z" fill="#d6e5ec" />
      </Ic>
    ),
  },
];

function Taskbar() {
  return (
    <div className="h-[60px] shrink-0 bg-[#d3e3ea] flex text-[#222]">
      <div className="w-[73px] flex items-center justify-center">
        <Ic w={25} h={25}>
          <path d="M0 3.5l10.5-1.5v10H0zM12 1.8L25 0v12H12zM0 13.5h10.5V23L0 21.5zM12 13.5h13V25l-13-1.8z" fill="#000" />
        </Ic>
      </div>
      <div className="w-[430px] h-[57px] mt-[2px] bg-white border-r-2 border-[#b6c2c8] flex items-center pl-[16px]">
        <Ic w={25} h={26}>
          <circle cx="15" cy="10" r="8.5" stroke="#222" strokeWidth="1.5" />
          <path d="M9 16L1 25" stroke="#222" strokeWidth="1.8" />
        </Ic>
        <span className="ml-[18px] mt-[4px] text-[22.7px] text-[#333]">Procurar</span>
      </div>
      <div className="w-[4px]" />
      <div className="flex">
        {taskIcons.map((t) => (
          <div key={t.k} className="relative w-[65.4px] first:mr-[7.5px] flex items-center justify-center">
            {t.node}
            {t.on && <div className="absolute bottom-0 left-[7px] right-[7px] h-[3px] bg-[#15b0b8]" />}
          </div>
        ))}
      </div>
      <div className="ml-[79.5px] flex items-center text-[#222]">
        <div className="relative">
          <Ic w={38} h={34}>
            <path d="M7 32a7 7 0 0 1-1-14 12 12 0 0 1 23-2 8 8 0 0 1 2 16z" fill="#a9c8ef" stroke="#6f9fe0" />
          </Ic>
          <div className="absolute -top-[4px] left-[18px] w-[18px] h-[20px] rounded-full bg-[#c42b1c] text-white text-[12px] flex items-center justify-center">1</div>
        </div>
        <span className="ml-[15px] text-[21px]">24°C</span>
        <div className="ml-[37px]"><Ic w={18} h={12}><path d="M1 11l8-9 8 9" stroke="#222" strokeWidth="1.3" /></Ic></div>
        <span className="ml-[19px] text-[19px]">POR</span>
        <div className="ml-[17px] mt-[2px] w-[95px] flex flex-col items-center text-[18px] leading-[28px]">
          <span>12:50</span>
          <span>01/10/2024</span>
        </div>
        <div className="relative ml-[30px]">
          <Ic w={24} h={28}><path d="M0 0h24v20H12l-5 7v-7H0z" fill="#000" /><path d="M4 6h16M4 10h16M4 14h10" stroke="#fff" /></Ic>
          <div className="absolute top-[10px] left-[11px] w-[25px] h-[25px] rounded-full bg-[#c9d2d6] border border-[#333] flex items-center justify-center text-[15px] text-black">11</div>
        </div>
      </div>
    </div>
  );
}

const MENU = ["File", "Edit", "View", "Insert", "Format", "Tools", "Draw", "Dimension", "Modify", "Parametric", "Window", "Help", "Express", "Data View"];
const TABS = ["Insert", "Annotate", "Parametric", "View", "Manage", "Output", "Add-ins", "Collaborate", "Express Tools", "Featured Apps"];

export default function App() {
  return (
    <div className="relative h-screen w-[1920px] overflow-hidden flex flex-col text-[17.7px] [font-family:Roboto,sans-serif] bg-[#222933]">
      {/* title bar */}
      <div className={`h-[44px] shrink-0 ${ROW_TITLE} flex items-center`}>
        <div className="w-[682px] shrink-0 flex items-center pl-[23px] pb-[1px]">
          {icons.logo}
          <div className="ml-[5px]"><Caret w={8} /></div>
          <div className="ml-[20px]">{icons.newDoc}</div>
          <div className="ml-[12px]">{icons.open}</div>
          <div className="ml-[12px]">{icons.save}</div>
          <div className="ml-[12px]">{icons.saveAs}</div>
          <div className="ml-[13px]">{icons.phone}</div>
          <div className="ml-[15px]">{icons.phoneUp}</div>
          <div className="ml-[14px]">{icons.print}</div>
          <div className="ml-[13px]">{icons.undo}</div>
          <div className="ml-[8px]"><Caret w={8} /></div>
          <div className="ml-[12px]">{icons.redo}</div>
          <div className="ml-[10px]"><Caret w={8} color="#8c929c" /></div>
          <div className="ml-[13px]">{icons.custom}</div>
          <div className="ml-[13px]">{icons.share}</div>
          <span className="ml-[7px] text-[#7cb9e8]">Share</span>
        </div>
        <div className="w-[242px] shrink-0 text-[#8a93a0]">Drawing1.dwg</div>
        <svg width="7" height="12" viewBox="0 0 7 12" className="shrink-0"><path d="M0 0l7 6-7 6z" fill="#d8d8d8" /></svg>
        <div className="ml-[8px] w-[268px] h-[32px] shrink-0 border-2 border-[#222933] flex items-center pl-[3px] italic text-[16.5px] text-[#a9aeb6]">Type a keyword or phrase</div>
        <div className="ml-[8px]">{icons.search}</div>
        <div className="ml-[12px]">{icons.user}</div>
        <span className="ml-[4px] text-[#eceef0] w-[127px] shrink-0">ricangelap</span>
        <Caret w={8} />
        <div className="ml-[19px]">{icons.cart}</div>
        <div className="ml-[13px]">{icons.tri}</div>
        <div className="ml-[8px]"><Caret w={8} /></div>
        <div className="ml-[16px] w-px h-[30px] bg-[#4f5869]" />
        <div className="ml-[12px]">{icons.help}</div>
        <div className="ml-[10px]"><Caret w={8} /></div>
        <div className="ml-[13px]">{icons.bubble}</div>
        <div className="ml-auto flex items-center gap-[53px] pr-[26px]">
          <WinMin />
          <WinMax />
          <WinClose />
        </div>
      </div>
      {/* menu bar */}
      <div className={`h-[29px] shrink-0 ${ROW_TITLE} flex items-center pl-[16px] gap-[27.3px] text-[#aab1bc] pb-[1px]`}>
        {MENU.map((m) => (
          <span key={m} className="whitespace-nowrap">{m}</span>
        ))}
        <div className="ml-auto flex items-center gap-[34px] pr-[17px]">
          <WinMin />
          <WinMax />
          <WinClose />
        </div>
      </div>
      {/* ribbon tabs */}
      <div className={`h-[37px] shrink-0 ${DARK} flex items-end pl-[8px] text-[#c6cad0]`}>
        <div className={`w-[76px] h-[30px] ${RIBBON} flex items-center justify-center text-[#f0f0f0] pt-[2px]`}>Home</div>
        <div className="h-[30px] flex items-center pl-[17px] gap-[30px] pt-[2px]">
          {TABS.map((t) => (
            <span key={t} className="whitespace-nowrap">{t}</span>
          ))}
        </div>
        <div className="h-[30px] flex items-center ml-[47px] gap-[3px]">
          <div className="w-[22px] h-[10px] bg-white flex items-center justify-center">
            <svg width="7" height="4" viewBox="0 0 7 4"><path d="M0 4l3.5-4L7 4z" fill="#777" /></svg>
          </div>
          <Caret w={7} />
        </div>
      </div>
      <Ribbon />
      {/* document tabs */}
      <div className={`h-[40px] shrink-0 ${DARK} flex items-center text-[#d8dade]`}>
        <div className="ml-[25px]"><Hamburger /></div>
        <span className="ml-[14px] text-[#5c6470] text-[22px]">/</span>
        <span className="ml-[15px] mt-[4px]">Start</span>
        <div className="ml-[22px] w-[150px] h-[35px] mt-[5px] bg-[#3b4452] [clip-path:polygon(9%_0,100%_0,91%_100%,0_100%)] flex items-center pl-[12px] font-bold text-[19px] text-[#f0f0f0] whitespace-nowrap">
          Drawing1*
          <div className="ml-[14px]"><Ic w={12} h={12}><path d="M1 1l10 10M11 1L1 11" stroke="#e6e6e6" strokeWidth="1.6" /></Ic></div>
        </div>
        <div className="ml-[9px]"><PlusSign s={20} w={2.5} /></div>
        <span className="ml-[18px] text-[#5c6470] text-[22px]">/</span>
      </div>
      <div className={`h-[8px] shrink-0 ${RIBBON}`} />
      <Viewport />
      {/* layout tabs */}
      <div className={`h-[6px] shrink-0 ${RIBBON}`} />
      <div className={`h-[44px] shrink-0 ${DARK} flex items-center text-[#d8dade]`}>
        <div className="ml-[25px] -mt-[5px]"><Hamburger /></div>
        <div className="ml-[13px] w-[105px] h-[36px] -mt-[8px] bg-[#3b4452] [clip-path:polygon(12%_0,100%_0,88%_100%,0_100%)] flex items-center justify-center font-bold text-[19px] text-[#f0f0f0] pt-[2px]">Model</div>
        <span className="ml-[10px] -mt-[6px]">Layout1</span>
        <span className="ml-[15px] -mt-[6px] text-[#5c6470] text-[22px]">/</span>
        <span className="ml-[13px] -mt-[6px]">Layout2</span>
        <span className="ml-[15px] -mt-[6px] text-[#5c6470] text-[22px]">/</span>
        <div className="ml-[15px] -mt-[6px]"><PlusSign s={22} w={3} /></div>
        <span className="ml-[15px] -mt-[6px] text-[#5c6470] text-[22px]">/</span>
      </div>
      <StatusBar />
      <Taskbar />
      {/* dynamic input tooltip */}
      <div className="absolute left-[1620px] top-[909px] flex items-start gap-[5px]">
        <div className="w-[222px] h-[36px] bg-[#999999] border border-black flex items-center pl-[7px] pb-[2px] text-[18px] text-[#1c1c1c] whitespace-nowrap">Specify a precision &lt;10&gt;:</div>
        <div className="w-[39px] h-[32px] bg-white border border-black flex items-center pl-[7px]">
          <span className="bg-[#0078d7] text-white text-[18px] leading-[24px]">10</span>
        </div>
      </div>
    </div>
  );
}
